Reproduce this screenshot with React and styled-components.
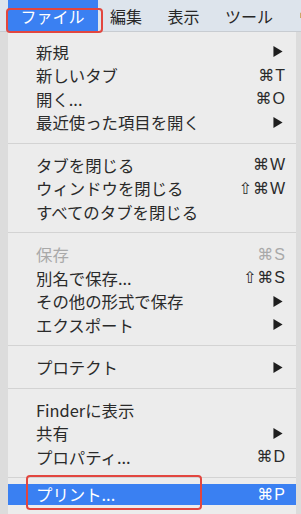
import styled, { createGlobalStyle } from "styled-components";

const GlobalStyle = createGlobalStyle`
  html, body {
    margin: 0;
    padding: 0;
    background: #dcdcdc;
  }
  body {
    font-family: "Noto Sans CJK JP", "Noto Sans", sans-serif;
  }
`;

const titles = ["ファイル", "編集", "表示", "ツール", "ウインドウ"];

const items = [
  { label: "新規", arrow: true },
  { label: "新しいタブ", key: "⌘T" },
  { label: "開く...", key: "⌘O" },
  { label: "最近使った項目を開く", arrow: true },
  "sep",
  { label: "タブを閉じる", key: "⌘W" },
  { label: "ウィンドウを閉じる", key: "⇧⌘W" },
  { label: "すべてのタブを閉じる" },
  "sep",
  { label: "保存", key: "⌘S", disabled: true },
  { label: "別名で保存...", key: "⇧⌘S" },
  { label: "その他の形式で保存", arrow: true },
  { label: "エクスポート", arrow: true },
  "sep",
  { label: "プロテクト", arrow: true },
  "sep",
  { label: "Finderに表示" },
  { label: "共有", arrow: true },
  { label: "プロパティ...", key: "⌘D" },
  "sep",
  { label: "プリント...", key: "⌘P", active: true },
];

function App() {
  return (
    <Page>
      <GlobalStyle />
      <MenuBar>
        {titles.map((t, i) => (
          <Title key={t} $active={i === 0}>
            {t}
          </Title>
        ))}
      </MenuBar>
      <Menu>
        {items.map((it, i) =>
          it === "sep" ? (
            <Separator key={i} />
          ) : (
            <Item key={i} $disabled={it.disabled} $active={it.active}>
              <Label>{it.label}</Label>
              {it.key && <Shortcut>{it.key}</Shortcut>}
              {it.arrow && (
                <Arrow viewBox="0 0 10 12">
                  <path d="M0 0 L10 6 L0 12 Z" fill="currentColor" />
                </Arrow>
              )}
            </Item>
          )
        )}
      </Menu>
      <Mark $top={8} $left={6} $w={97} $h={25} />
      <Mark $top={475} $left={26} $w={176} $h={35} />
    </Page>
  );
}

export default App;

const Page = styled.div`
  position: relative;
  width: 301px;
  height: 514px;
  overflow: hidden;
  background: #dcdcdc;
`;

const MenuBar = styled.div`
  display: flex;
  height: 31px;
  padding-left: 8px;
  background: #dde4ec;
  border-bottom: 1px solid #c8ccd1;
  white-space: nowrap;
`;

const Title = styled.div`
  display: flex;
  align-items: center;
  padding: 0 13px 0 12.5px;
  font-size: 16px;
  color: ${(p) => (p.$active ? "#ffffff" : "#262626")};
  background: ${(p) => (p.$active ? "#3a80f2" : "transparent")};
  flex-shrink: 0;
`;

const Menu = styled.div`
  margin-left: 8px;
  width: 288px;
  height: 482px;
  padding-top: 8px;
  box-sizing: border-box;
  background: #ececec;
`;

const Item = styled.div`
  display: flex;
  align-items: center;
  justify-content: space-between;
  height: ${(p) => (p.$active ? "21px" : "23.5px")};
  margin-top: ${(p) => (p.$active ? "-4px" : "0")};
  padding: 0 10px 0 28px;
  font-size: 16.4px;
  color: ${(p) =>
    p.$active ? "#ffffff" : p.$disabled ? "#a9a9a9" : "#2a2a2a"};
  background: ${(p) => (p.$active ? "#3a80f2" : "transparent")};
`;

const Label = styled.span`
  white-space: nowrap;
`;

const Shortcut = styled.span`
  font-family: "Liberation Sans", "DejaVu Sans", sans-serif;
  font-size: 16px;
  letter-spacing: 1px;
`;

const Arrow = styled.svg`
  width: 10px;
  height: 11px;
  margin-right: 3px;
  color: #1e1e1e;
`;

const Separator = styled.div`
  height: 1px;
  margin: 8.5px 0 9.5px;
  background: #d3d3d3;
`;

const Mark = styled.div`
  position: absolute;
  top: ${(p) => p.$top}px;
  left: ${(p) => p.$left}px;
  width: ${(p) => p.$w}px;
  height: ${(p) => p.$h}px;
  box-sizing: border-box;
  border: 2.5px solid #e2463f;
  border-radius: 4px;
`;
